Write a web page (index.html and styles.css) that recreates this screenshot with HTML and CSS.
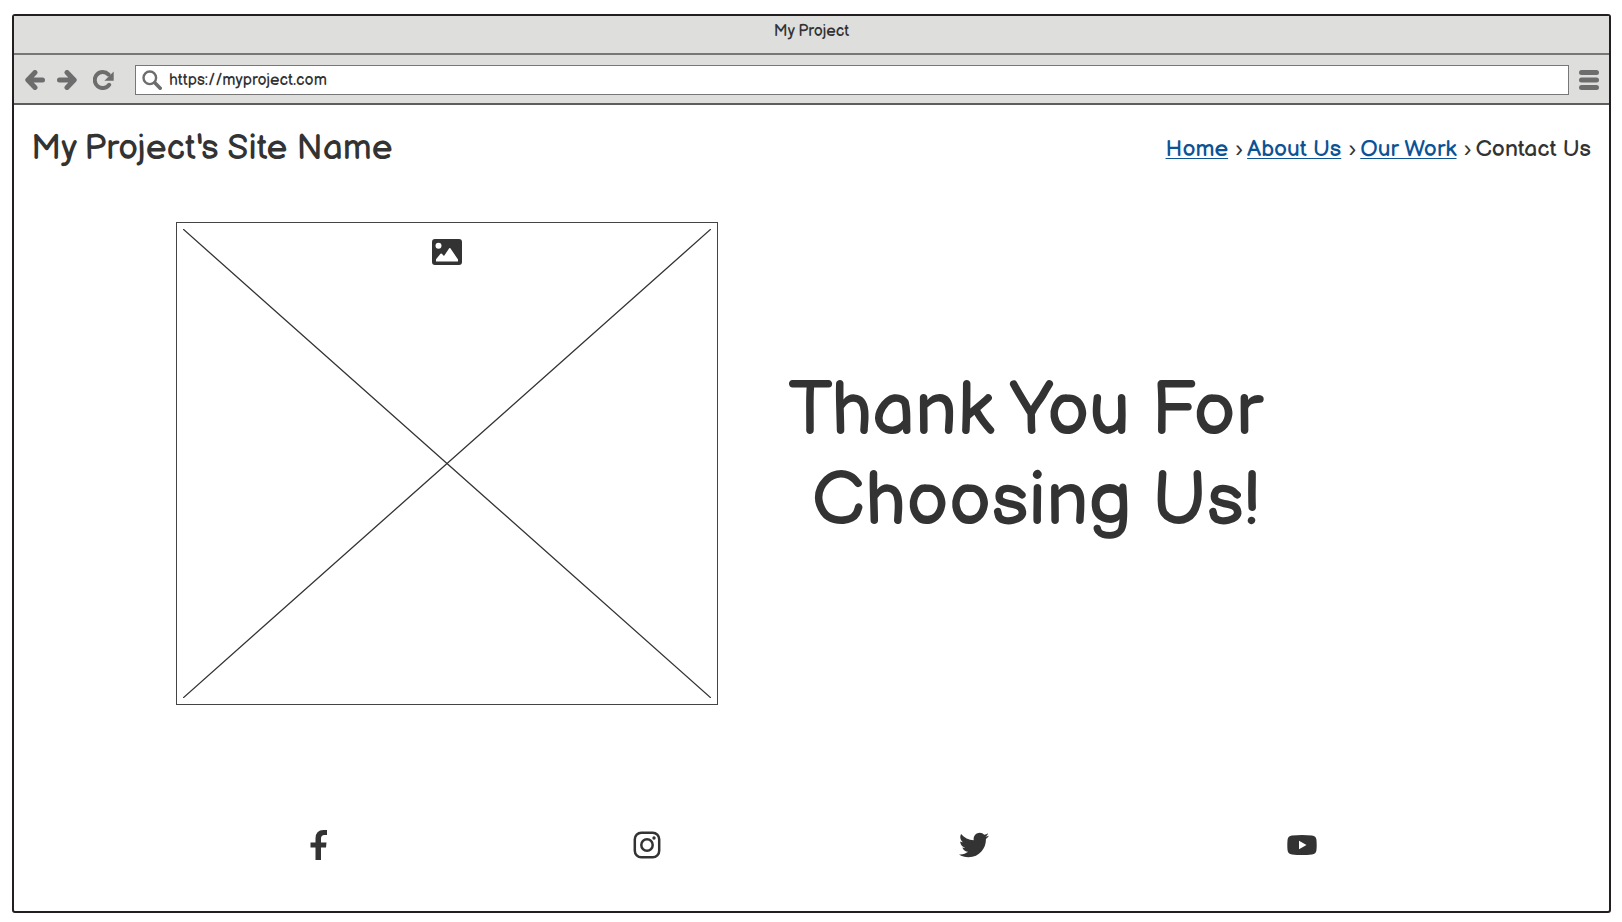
FILE: index.html
```html
<!DOCTYPE html>
<html lang="en">
<head>
<meta charset="utf-8">
<meta name="viewport" content="width=device-width, initial-scale=1">
<title>My Project</title>
<link rel="stylesheet" href="styles.css">
</head>
<body>
<div class="browser">
  <div class="titlebar">My Project</div>
  <div class="toolbar">
    <button class="tool" type="button" aria-label="Back">
      <svg width="20" height="20" viewBox="0 0 20 20"><path d="M10 2.500 2.800 10l7.200 7.500M3.500 10h14" fill="none" stroke="currentColor" stroke-width="5" stroke-linecap="round" stroke-linejoin="round"/></svg>
    </button>
    <button class="tool" type="button" aria-label="Forward">
      <svg width="20" height="20" viewBox="0 0 20 20"><path d="M10 2.500 17.200 10 10 17.500M16.500 10h-14" fill="none" stroke="currentColor" stroke-width="5" stroke-linecap="round" stroke-linejoin="round"/></svg>
    </button>
    <button class="tool reload" type="button" aria-label="Reload">
      <svg width="22" height="20" viewBox="0 0 22 20"><path d="M16.200 14.800A8 8 0 1 1 15.500 4.500" fill="none" stroke="currentColor" stroke-width="4" stroke-linecap="round"/><path d="M20.700 1.500v9.300h-9.300z" fill="currentColor"/></svg>
    </button>
    <label class="address">
      <svg width="20" height="20" viewBox="0 0 20 20" aria-hidden="true"><circle cx="7.800" cy="7.800" r="6.300" fill="none" stroke="currentColor" stroke-width="2.400"/><path d="m12.800 12.800 5.400 5.400" stroke="currentColor" stroke-width="3.600" stroke-linecap="round"/></svg>
      <input class="url" type="text" value="https://myproject.com" aria-label="Address">
    </label>
    <button class="tool menu" type="button" aria-label="Menu">
      <svg width="20" height="20" viewBox="0 0 20 20"><path d="M2.500 2.500h15M2.500 10h15M2.500 17.500h15" stroke="currentColor" stroke-width="5" stroke-linecap="round"/></svg>
    </button>
  </div>
  <header class="header">
    <h1 class="site-name">My Project's Site Name</h1>
    <nav class="crumbs" aria-label="Main">
      <a href="#home">Home</a><span class="sep">›</span><a href="#about">About Us</a><span class="sep">›</span><a href="#work">Our Work</a><span class="sep">›</span><span>Contact Us</span>
    </nav>
  </header>
  <main class="hero">
    <div class="picture" role="img" aria-label="Image placeholder">
      <svg class="cross" viewBox="0 0 100 100" preserveAspectRatio="none"><path d="M0 0 100 100M100 0 0 100" fill="none" stroke="currentColor" stroke-width="1.300" vector-effect="non-scaling-stroke"/></svg>
      <svg class="badge" width="30" height="26" viewBox="0 0 30 26"><path fill="currentColor" fill-rule="evenodd" d="M3 0h24a3 3 0 0 1 3 3v20a3 3 0 0 1-3 3H3a3 3 0 0 1-3-3V3a3 3 0 0 1 3-3zM6.500 3.700a3 3 0 1 0 0 6 3 3 0 0 0 0-6zM4 22.500h22v-2L18.400 9.300q-.6-.8-1.200 0L12 17l-2.200-2.200q-.7-.6-1.300 0L4 20.300z"/></svg>
    </div>
    <h2 class="thanks">Thank You For<br>&nbsp;Choosing Us!</h2>
  </main>
  <footer class="social">
    <a href="#facebook" aria-label="Facebook"><svg width="18" height="30" viewBox="0 0 18 30"><path fill="currentColor" d="M5.500 30V17.500H.5v-5h5V8.500q0-8.500 8-8.500H17v5h-2.500q-3.500 0-3.500 3.500v4h5.500l-.5 5h-5V30z"/></svg></a>
    <a href="#instagram" aria-label="Instagram"><svg width="28" height="28" viewBox="0 0 28 28"><g fill="none" stroke="currentColor" stroke-width="2.500"><rect x="1.800" y="1.800" width="24.400" height="24.400" rx="6.500"/><circle cx="14" cy="14" r="5.700"/></g><circle cx="21" cy="7" r="1.700" fill="currentColor"/></svg></a>
    <a href="#twitter" aria-label="Twitter"><svg width="30" height="26" viewBox="0 48 512 416"><path fill="currentColor" d="M459.370 151.716c.325 4.548.325 9.097.325 13.645 0 138.720-105.583 298.558-298.558 298.558-59.452 0-114.680-17.219-161.137-47.106 8.447.974 16.568 1.299 25.340 1.299 49.055 0 94.213-16.568 130.274-44.832-46.132-.975-84.792-31.188-98.112-72.772 6.498.974 12.995 1.624 19.818 1.624 9.421 0 18.843-1.300 27.614-3.573-48.081-9.747-84.143-51.980-84.143-102.985v-1.299c13.969 7.797 30.214 12.670 47.431 13.319-28.264-18.843-46.781-51.005-46.781-87.391 0-19.492 5.197-37.360 14.294-52.954 51.655 63.675 129.300 105.258 216.365 109.807-1.624-7.797-2.599-15.918-2.599-24.040 0-57.828 46.782-104.934 104.934-104.934 30.213 0 57.502 12.670 76.670 33.137 23.715-4.548 46.456-13.320 66.599-25.340-7.798 24.366-24.366 44.833-46.132 57.827 21.117-2.273 41.584-8.122 60.426-16.243-14.292 20.791-32.161 39.308-52.628 54.253z"/></svg></a>
    <a href="#youtube" aria-label="YouTube"><svg width="30" height="20" viewBox="0 0 30 20"><path fill="currentColor" fill-rule="evenodd" d="M5 .5Q15-.5 25 .5q4 .4 4.400 4 .6 5.500 0 11-.4 3.600-4.400 4-10 1-20 0-4-.4-4.400-4-.6-5.500 0-11Q1 .9 5 .5zM12 5.700v8.600l7.500-4.300z"/></svg></a>
  </footer>
</div>
</body>
</html>
```
FILE: styles.css
```css
* { box-sizing: border-box; }

body {
  margin: 0;
  padding: 14px 11px 9px 12px;
  min-height: 100vh;
  display: flex;
  background: #fff;
  color: #333;
  font-family: "Balsamiq Sans", Lato, "Open Sans", sans-serif;
  font-weight: 400;
}

.browser {
  flex: 1;
  min-width: 0;
  display: flex;
  flex-direction: column;
  border: 2px solid #231f20;
  border-radius: 3px;
}

.titlebar {
  height: 39px;
  padding-top: 6px;
  background: #dededd;
  border-bottom: 2px solid #777;
  font-size: 16px;
  line-height: 20px;
  text-align: center;
}

.toolbar {
  display: flex;
  align-items: center;
  height: 50px;
  padding: 2px 10px 0 11px;
  background: #dededd;
  border-bottom: 2px solid #5e5e5e;
}

.tool {
  display: flex;
  margin: 0 12px 0 0;
  padding: 0;
  border: 0;
  background: none;
  color: #6d6d6d;
}

.reload { margin: 0 20px 0 4px; }
.menu { margin: 0 0 0 10px; }

.address {
  flex: 1;
  display: flex;
  align-items: center;
  gap: 7px;
  height: 30px;
  padding: 0 6px;
  background: #fff;
  border: 1px solid #777;
  color: #6d6d6d;
}

.url {
  flex: 1;
  min-width: 0;
  padding: 0;
  border: 0;
  outline: 0;
  background: none;
  color: #333;
  font: inherit;
  font-size: 16px;
}

.header {
  display: flex;
  align-items: center;
  justify-content: space-between;
  padding: 22px 18px 0 17px;
}

.site-name {
  margin: 0;
  font-size: 35px;
  font-weight: 400;
  line-height: 44px;
}

.crumbs {
  display: flex;
  font-size: 23px;
  line-height: 28px;
}

.crumbs a {
  color: #0b5394;
  text-decoration-thickness: 1px;
  text-underline-offset: 2px;
}

.sep {
  width: 19px;
  padding-left: 3px;
  font-family: "Liberation Sans", sans-serif;
  text-align: center;
}

.hero {
  display: flex;
  align-items: center;
  gap: 70px;
  padding: 51px 162px 0;
}

.picture {
  flex: 0 1 542px;
  display: grid;
  height: 483px;
  padding: 6px;
  border: 1px solid #444;
}

.cross {
  grid-area: 1 / 1;
  width: 100%;
  height: 100%;
}

.badge {
  grid-area: 1 / 1;
  justify-self: center;
  margin-top: 10px;
}

.thanks {
  margin: 0;
  padding-bottom: 14px;
  font-size: 75px;
  font-weight: 400;
  line-height: 90px;
  text-align: center;
}

.social {
  display: grid;
  grid-template-columns: repeat(4, 1fr);
  flex: 1;
  align-content: center;
  padding: 74px 143px 0 141px;
}

.social a {
  display: flex;
  align-items: center;
  justify-content: center;
  color: #333;
}
```
